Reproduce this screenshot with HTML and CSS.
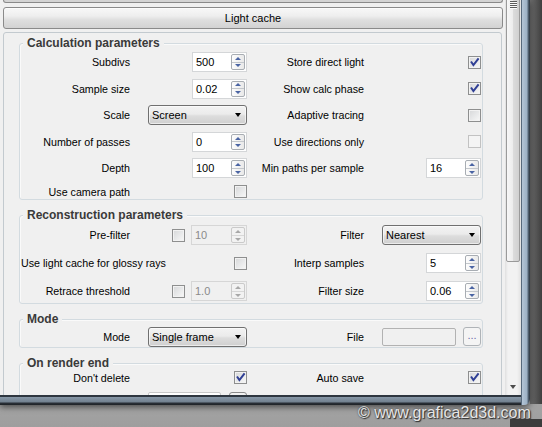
FILE: index.html
```html
<!DOCTYPE html>
<html lang="en">
<head>
<meta charset="utf-8">
<title>Light cache</title>
<link rel="stylesheet" href="styles.css">
</head>
<body>
<div class="desk">
  <div class="frame">
    <div class="client">
      <div class="content">
        <div class="prevbtn"></div>
        <div class="rollbtn">Light cache</div>
        <div class="panel">

          <section class="group g1">
            <div class="gtitle">Calculation parameters</div>
            <div class="rows">
              <div class="lbl">Subdivs</div>
              <div class="ctl"><div class="spin"><span class="v">500</span><span class="arr"><i class="u"></i><i class="d"></i></span></div></div>
              <div class="lbl">Store direct light</div>
              <div class="ctl"><span class="cb"><svg width="11" height="11" viewBox="0 0 11 11"><path d="M2 4.5 L4.4 8 L9.6 1.4" fill="none" stroke="#2f3f95" stroke-width="2"/></svg></span></div>

              <div class="lbl">Sample size</div>
              <div class="ctl"><div class="spin"><span class="v">0.02</span><span class="arr"><i class="u"></i><i class="d"></i></span></div></div>
              <div class="lbl">Show calc phase</div>
              <div class="ctl"><span class="cb"><svg width="11" height="11" viewBox="0 0 11 11"><path d="M2 4.5 L4.4 8 L9.6 1.4" fill="none" stroke="#2f3f95" stroke-width="2"/></svg></span></div>

              <div class="lbl">Scale</div>
              <div class="ctl"><div class="combo">Screen</div></div>
              <div class="lbl">Adaptive tracing</div>
              <div class="ctl"><span class="cb"></span></div>

              <div class="lbl">Number of passes</div>
              <div class="ctl"><div class="spin"><span class="v">0</span><span class="arr"><i class="u"></i><i class="d"></i></span></div></div>
              <div class="lbl">Use directions only</div>
              <div class="ctl"><span class="cb dis"></span></div>

              <div class="lbl">Depth</div>
              <div class="ctl"><div class="spin"><span class="v">100</span><span class="arr"><i class="u"></i><i class="d"></i></span></div></div>
              <div class="lbl">Min paths per sample</div>
              <div class="ctl"><div class="spin"><span class="v">16</span><span class="arr"><i class="u"></i><i class="d"></i></span></div></div>

              <div class="lbl">Use camera path</div>
              <div class="ctl"><span class="cb"></span></div>
              <div></div>
              <div></div>
            </div>
          </section>

          <section class="group g2">
            <div class="gtitle">Reconstruction parameters</div>
            <div class="rows">
              <div class="lbl">Pre-filter</div>
              <div class="ctl pair"><span class="cb"></span><div class="spin dis wide"><span class="v">10</span><span class="arr"><i class="u"></i><i class="d"></i></span></div></div>
              <div class="lbl">Filter</div>
              <div class="ctl"><div class="combo">Nearest</div></div>

              <div class="lbl left">Use light cache for glossy rays</div>
              <div class="ctl"><span class="cb"></span></div>
              <div class="lbl">Interp samples</div>
              <div class="ctl"><div class="spin"><span class="v">5</span><span class="arr"><i class="u"></i><i class="d"></i></span></div></div>

              <div class="lbl">Retrace threshold</div>
              <div class="ctl pair"><span class="cb"></span><div class="spin dis wide"><span class="v">1.0</span><span class="arr"><i class="u"></i><i class="d"></i></span></div></div>
              <div class="lbl">Filter size</div>
              <div class="ctl"><div class="spin"><span class="v">0.06</span><span class="arr"><i class="u"></i><i class="d"></i></span></div></div>
            </div>
          </section>

          <section class="group g3">
            <div class="gtitle">Mode</div>
            <div class="rows">
              <div class="lbl">Mode</div>
              <div class="ctl"><div class="combo">Single frame</div></div>
              <div class="lbl">File</div>
              <div class="ctl file"><span class="inp"></span><span class="dots">...</span></div>
            </div>
          </section>

          <section class="group g4">
            <div class="gtitle">On render end</div>
            <div class="rows">
              <div class="lbl">Don't delete</div>
              <div class="ctl"><span class="cb"><svg width="11" height="11" viewBox="0 0 11 11"><path d="M2 4.5 L4.4 8 L9.6 1.4" fill="none" stroke="#2f3f95" stroke-width="2"/></svg></span></div>
              <div class="lbl">Auto save</div>
              <div class="ctl"><span class="cb"><svg width="11" height="11" viewBox="0 0 11 11"><path d="M2 4.5 L4.4 8 L9.6 1.4" fill="none" stroke="#2f3f95" stroke-width="2"/></svg></span></div>

              <div class="lbl"></div>
              <div class="ctl save"><span class="inp en"></span><span class="dots en"></span></div>
              <div></div>
              <div></div>
            </div>
          </section>

        </div>
      </div>
      <div class="sbar">
        <div class="thumb"><div class="grip"><i></i><i></i><i></i><i></i></div></div>
        <div class="track"></div>
        <div class="sdown"></div>
      </div>
    </div>
  </div>
  <div class="watermark">© www.grafica2d3d.com</div>
</div>
</body>
</html>
```

FILE: styles.css
```css
* { box-sizing: border-box; }
html, body { margin: 0; padding: 0; }
body {
  width: 542px;
  height: 427px;
  overflow: hidden;
  font-family: "Liberation Sans", Arial, sans-serif;
  font-size: 10.7px;
  color: #000;
}

.desk {
  position: relative;
  width: 542px;
  height: 427px;
  overflow: hidden;
  background:
    linear-gradient(to right, #707070, #3e3e3e) right top / 12px 404px no-repeat,
    linear-gradient(#3c3c3c, #3c3c3c) right bottom / 32px 8px no-repeat,
    linear-gradient(#8e8e8e, #a2a2a2 410px, #9e9e9e);
}

/* window frame */
.frame {
  width: 530px;
  height: 405px;
  padding: 0 9px 10px 0;
  border-bottom-right-radius: 6px;
  background:
    linear-gradient(to right, #56687b 0, #56687b 1px, #b4c5d6 1px, #9cb0c4 6px, #5a6b7c 7px, #2b323a 9px) right top / 9px 100% no-repeat,
    linear-gradient(#2e363f 0, #2e363f 2px, #8797a7 2px, #72818f 7px, #2a3038 8px, #1e2226 10px) left bottom / 100% 10px no-repeat;
  box-shadow: 0 2px 6px rgba(0, 0, 0, 0.55);
}
.client {
  display: flex;
  width: 521px;
  height: 395px;
  overflow: hidden;
}
.content {
  width: 505px;
  height: 395px;
  overflow: hidden;
  background: #f0f0f0;
  padding-left: 3px;
}

/* rollout buttons */
.prevbtn {
  width: 500px;
  height: 3px;
  border: 1px solid #8a8a8a;
  border-top: 0;
  border-radius: 0 0 3px 3px;
  background: #d4d4d4;
}
.rollbtn {
  margin-top: 4px;
  width: 500px;
  height: 22px;
  border: 1px solid #8a8a8a;
  border-radius: 3px;
  background: linear-gradient(#f8f8f8 0, #eeeeee 40%, #dedede 60%, #d2d2d2 100%);
  box-shadow: inset 0 1px 0 #fdfdfd;
  text-align: center;
  line-height: 20px;
  font-size: 11px;
}

.panel {
  margin-top: 3px;
  width: 499px;
  height: 420px;
  border: 1px solid #c3cacf;
  border-radius: 3px;
  padding: 10px 18px 0 15px;
}

/* group boxes */
.group {
  border: 1px solid #d3dbe0;
  border-radius: 3px;
  box-shadow: inset 1px 1px 0 #fafafa;
}
.group + .group { margin-top: 15px; }
.gtitle {
  display: block;
  width: max-content;
  margin: -8px 0 0 3px;
  padding: 0 4px;
  background: #f0f0f0;
  font-weight: bold;
  font-size: 12px;
  line-height: 14px;
  color: #3a3a3a;
}

.rows {
  display: grid;
  grid-template-columns: 128px 99px 135px 99px;
  align-items: center;
}
.g1 .rows { margin-top: 2px; row-gap: 6.6px; }
.g2 .rows { margin-top: 3.5px; row-gap: 8px; padding-bottom: 1.5px; }
.g3 .rows { margin-top: 1px; }
.g4 .rows { margin-top: 1px; row-gap: 7px; }

.lbl {
  text-align: right;
  padding-right: 18px;
  line-height: 14px;
  white-space: nowrap;
}
.lbl.left {
  text-align: left;
  padding: 0 0 0 1px;
}
.ctl {
  display: flex;
  justify-content: flex-end;
  align-items: center;
}
.ctl.pair { gap: 6px; }
.ctl.file { gap: 7px; }
.ctl.save { gap: 8px; }

/* spinner */
.spin {
  width: 55px;
  height: 20px;
  border: 1px solid #d4d6d8;
  background: #fff;
  display: flex;
  padding: 1px;
  font-size: 11px;
}
.spin.wide { width: 56px; }
.spin .v {
  flex: 1;
  padding-left: 2px;
  line-height: 17px;
}
.arr {
  width: 14px;
  border: 1px solid #a8adb3;
  border-radius: 2px;
  background: linear-gradient(to right, #fdfdfd, #e9e9e9);
  display: flex;
  flex-direction: column;
}
.arr i {
  flex: 1;
  display: flex;
  align-items: center;
  justify-content: center;
}
.arr i + i { border-top: 1px solid #c3c7cc; }
.arr i::before {
  content: "";
  border-left: 3px solid transparent;
  border-right: 3px solid transparent;
}
.arr i.u::before { border-bottom: 3px solid #4a64a3; }
.arr i.d::before { border-top: 3px solid #4a64a3; }

.spin.dis {
  background: #f0f0f0;
  border-color: #d6d6d6;
  color: #8a8a8a;
}
.spin.dis .arr { border-color: #cacaca; background: #f2f2f2; }
.spin.dis .arr i + i { border-top-color: #d8d8d8; }
.spin.dis .arr i.u::before { border-bottom-color: #a8a8a8; }
.spin.dis .arr i.d::before { border-top-color: #a8a8a8; }

/* combo */
.combo {
  width: 99px;
  height: 20px;
  border: 1px solid #707070;
  border-radius: 3px;
  background: linear-gradient(#f3f3f3 0, #ebebeb 45%, #dddddd 55%, #cfcfcf 100%);
  box-shadow: inset 0 0 0 1px rgba(255, 255, 255, 0.6);
  display: flex;
  align-items: center;
  justify-content: space-between;
  padding: 0 5px 0 3px;
  line-height: 14px;
  font-size: 11px;
}
.combo::after {
  content: "";
  border-left: 3.5px solid transparent;
  border-right: 3.5px solid transparent;
  border-top: 4px solid #000;
}

/* checkbox */
.cb {
  width: 13px;
  height: 13px;
  border: 1px solid #8e8f8f;
  background: linear-gradient(135deg, #d6d7d9, #f8f8f8);
  box-shadow: inset 0 0 0 1px #f2f2f2;
  display: flex;
}
.cb svg { display: block; }
.cb.dis {
  border-color: #c2c2c2;
  background: #f4f4f4;
  box-shadow: none;
}

/* file field */
.inp {
  width: 74px;
  height: 18px;
  border: 1px solid #b2b2b2;
  border-radius: 2px;
  background: #f0f0f0;
}
.dots {
  width: 18px;
  height: 19px;
  border: 1px solid #afb3b7;
  border-radius: 3px;
  background: #f4f4f4;
  color: #6c6ca8;
  font-size: 11px;
  line-height: 15px;
  text-align: center;
}
.inp.en { width: 73px; height: 20px; background: #fff; border-color: #c8c8c8; }
.dots.en { height: 20px; border-color: #8a8a8a; background: linear-gradient(#f3f3f3, #dcdcdc); }

/* scrollbar */
.sbar {
  width: 16px;
  height: 395px;
  display: flex;
  flex-direction: column;
  background: linear-gradient(to right, #e0e0e0, #f2f2f2 3px, #f2f2f2 12px, #e2e2e2);
}
.thumb {
  flex: none;
  margin: -6px 1px 0 1px;
  height: 268px;
  border: 1px solid #9a9a9a;
  border-radius: 2px;
  background: linear-gradient(to right, #f7f7f7, #ececec 50%, #dcdcdc 50%, #d0d0d0);
}
.grip {
  margin: 6px auto 0;
  width: 7px;
  display: flex;
  flex-direction: column;
  gap: 1px;
}
.grip i {
  height: 1px;
  background: #5c5c5c;
  box-shadow: 0 1px 0 #fbfbfb;
}
.track { flex: 1; }
.sdown {
  height: 17px;
  display: flex;
  align-items: center;
  justify-content: center;
}
.sdown::before {
  content: "";
  border-left: 3.5px solid transparent;
  border-right: 3.5px solid transparent;
  border-top: 4px solid #4c4c4c;
}

/* watermark overlay */
.watermark {
  position: absolute;
  left: 358px;
  top: 404px;
  font-family: "Liberation Sans", Arial, sans-serif;
  font-size: 16px;
  line-height: 18px;
  color: #e6e6e6;
  white-space: nowrap;
  text-shadow: 0 0 2px #3a3a3a, 1px 1px 1px #2a2a2a;
}
```
